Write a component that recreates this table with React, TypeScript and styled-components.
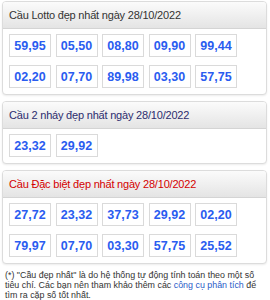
import React from 'react'
import styled, { createGlobalStyle } from 'styled-components'

const GlobalStyle = createGlobalStyle`
  body {
    margin: 0;
    background: #fff;
    font-family: "Liberation Sans", Arial, sans-serif;
  }
`

const Page = styled.div`
  width: 270px;
  padding: 1px 3px 0 2px;
  box-sizing: border-box;
  display: flex;
  flex-direction: column;
  gap: 6px;
`

const Panel = styled.div`
  border: 1px solid #dcdcdc;
  border-radius: 4px;
  background: #fff;
  box-shadow: 0 1px 2px rgba(0, 0, 0, 0.08);
  overflow: hidden;
`

const Header = styled.div<{ $tone: string }>`
  height: 26px;
  display: flex;
  align-items: center;
  padding-left: 6px;
  font-size: 11px;
  letter-spacing: -0.2px;
  color: ${p => p.$tone};
  background: linear-gradient(to bottom, #fbfbfb, #e4e4e4);
  border-bottom: 1px solid #d4d4d4;
`

const Grid = styled.div`
  display: grid;
  grid-template-columns: repeat(5, 42px);
  column-gap: 4.5px;
  row-gap: 8px;
  padding: 5px 6px 6px 6px;
`

const Cell = styled.div`
  height: 23px;
  box-sizing: border-box;
  border: 1px solid #dadada;
  display: flex;
  align-items: center;
  justify-content: center;
  font-weight: bold;
  font-size: 12.5px;
  color: #2a5cf0;
`

const Note = styled.p`
  margin: 6px 4px 0 5px;
  font-size: 8.9px;
  line-height: 10px;
  color: #333;
`

const Link = styled.span`
  color: #2a5cc8;
`

const panels = [
  {
    title: 'Cầu Lotto đẹp nhất ngày 28/10/2022',
    tone: '#333',
    nums: ['59,95', '05,50', '08,80', '09,90', '99,44', '02,20', '07,70', '89,98', '03,30', '57,75'],
  },
  {
    title: 'Cầu 2 nháy đẹp nhất ngày 28/10/2022',
    tone: '#2c2c6e',
    nums: ['23,32', '29,92'],
  },
  {
    title: 'Cầu Đặc biệt đẹp nhất ngày 28/10/2022',
    tone: '#d40000',
    nums: ['27,72', '23,32', '37,73', '29,92', '02,20', '79,97', '07,70', '03,30', '57,75', '25,52'],
  },
]

export default function App() {
  return (
    <>
      <GlobalStyle />
      <Page>
        {panels.map(p => (
          <Panel key={p.title}>
            <Header $tone={p.tone}>{p.title}</Header>
            <Grid>
              {p.nums.map((n, i) => (
                <Cell key={i}>{n}</Cell>
              ))}
            </Grid>
          </Panel>
        ))}
      </Page>
      <Note>
        (*) "Cầu đẹp nhất" là do hệ thống tự động tính toán theo một số tiêu chí. Các bạn nên tham khảo thêm các{' '}
        <Link>công cụ phân tích</Link> để tìm ra cặp số tốt nhất.
      </Note>
    </>
  )
}
